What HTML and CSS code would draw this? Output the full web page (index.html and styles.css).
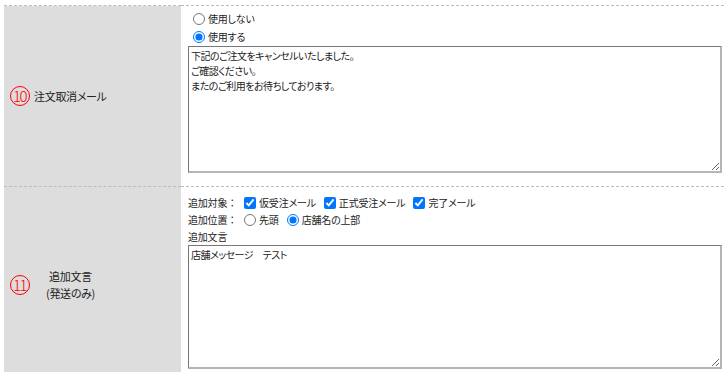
FILE: index.html
```html
<!DOCTYPE html>
<html lang="ja">
<head>
    <meta charset="UTF-8">
    <title>メール設定</title>
    <link rel="stylesheet" href="styles.css">
</head>
<body>
<table class="form">
    <tr>
        <th><span class="num">10</span><span class="lbl">注文取消メール</span></th>
        <td class="row1">
            <label class="line"><input type="radio" name="cancel">使用しない</label>
            <label class="line"><input type="radio" name="cancel" checked>使用する</label>
            <textarea class="msg msg1">下記のご注文をキャンセルいたしました。
ご確認ください。
またのご利用をお待ちしております。</textarea>
        </td>
    </tr>
    <tr>
        <th><span class="num">11</span><span class="lbl center">追加文言<br>(発送のみ)</span></th>
        <td class="row2">
            <div class="line"><span class="key">追加対象：</span>
                <label><input type="checkbox" checked>仮受注メール</label>
                <label><input type="checkbox" checked>正式受注メール</label>
                <label><input type="checkbox" checked>完了メール</label>
            </div>
            <div class="line"><span class="key">追加位置：</span>
                <label><input type="radio" name="pos">先頭</label>
                <label><input type="radio" name="pos" checked>店舗名の上部</label>
            </div>
            <div class="line plain">追加文言</div>
            <textarea class="msg msg2">店舗メッセージ　テスト</textarea>
        </td>
    </tr>
</table>
</body>
</html>
```

FILE: styles.css
```css
* {
    box-sizing: border-box;
}

body {
    margin: 0;
    padding: 5px 0 0 4px;
    font-family: "Noto Sans CJK JP", "Noto Sans", sans-serif;
    font-size: 11px;
    font-feature-settings: "palt";
    color: #222;
    overflow: hidden;
}

.form {
    width: 720px;
    border-collapse: collapse;
}

.form tr {
    border-top: 1px dashed #bdbdbd;
}

.form th {
    width: 177px;
    background: #dddddd;
    font-weight: normal;
    text-align: left;
    padding: 0 0 0 6px;
    vertical-align: middle;
    letter-spacing: -0.3px;
}

.form td {
    padding: 4px 2px 13px 7px;
    vertical-align: top;
    font-size: 10px;
    letter-spacing: -0.2px;
}

.form td.row2 {
    padding-top: 7px;
}

.num {
    display: inline-block;
    width: 20px;
    height: 20px;
    border: 1px solid #f00;
    border-radius: 50%;
    color: #f00;
    font-size: 15px;
    font-weight: 300;
    line-height: 18px;
    text-align: center;
    letter-spacing: -1.5px;
    text-indent: -1px;
    vertical-align: middle;
    margin-right: 4px;
}

.lbl {
    display: inline-block;
    vertical-align: middle;
    line-height: 17px;
}

.lbl.center {
    text-align: center;
    margin-left: 12px;
}

.line {
    display: block;
    height: 18px;
    line-height: 18px;
}

.row2 .line {
    height: 17px;
    line-height: 17px;
}

.row2 .line.plain {
    height: 16px;
}

.key {
    font-feature-settings: normal;
    margin-right: 3px;
}

.line input {
    margin: 0 3px 0 5px;
    width: 12px;
    height: 12px;
    vertical-align: -2px;
}

.row2 .line label {
    margin-right: 1px;
}

.row2 .line label:first-of-type input {
    margin-left: 2px;
}

.msg {
    display: block;
    width: 534px;
    margin: 0;
    padding: 1px 2px;
    font-family: inherit;
    font-size: 10px;
    font-feature-settings: "palt";
    letter-spacing: -0.5px;
    line-height: 15px;
    color: #222;
    border-style: solid;
    border-width: 1px 2px 2px 1px;
    border-color: #777 #b5b5b5 #b5b5b5 #777;
    resize: both;
}

.msg1 {
    height: 127px;
}

.msg2 {
    margin-top: 1px;
    height: 124px;
}
```
